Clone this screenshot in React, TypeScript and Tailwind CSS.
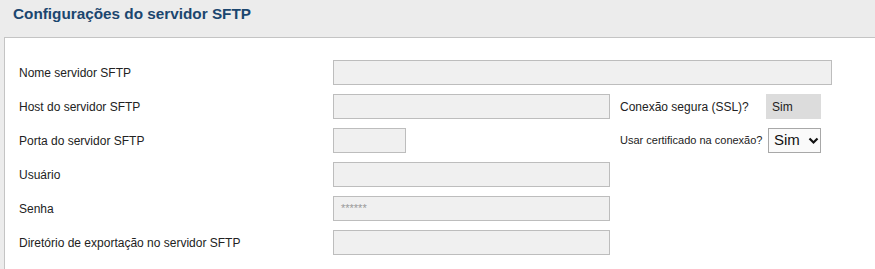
import React from "react";

const font = { fontFamily: '"Liberation Sans", Arial, sans-serif' };

function Field({ w, children }: { w: string; children?: React.ReactNode }) {
  return (
    <div className={`${w} shrink-0 h-[25px] border border-[#bdbdbd] bg-[#f0f0f0] flex items-center pl-[7px] text-[11px] text-[#9a9a9a]`}>
      {children}
    </div>
  );
}

function Label({ children }: { children: React.ReactNode }) {
  return <div className="w-[314px] shrink-0 whitespace-nowrap text-[12px] text-[#222]">{children}</div>;
}

export default function App() {
  return (
    <div className="w-[875px] h-[269px] bg-[#ececec] overflow-hidden" style={font}>
      <div className="h-[37px] pl-[13px] pt-[4px]">
        <h1 className="text-[15.3px] font-bold text-[#1b466f] leading-[20px]">Configurações do servidor SFTP</h1>
      </div>
      <div className="ml-[4px] h-[232px] bg-white border-l border-t border-[#c4c4c4] pl-[14px] pt-[22px] flex flex-col gap-[9px]">
        <div className="flex items-center">
          <Label>Nome servidor SFTP</Label>
          <Field w="w-[499px]" />
        </div>
        <div className="flex items-center">
          <Label>Host do servidor SFTP</Label>
          <Field w="w-[277px]" />
          <div className="ml-[10px] w-[146px] shrink-0 whitespace-nowrap text-[12px] text-[#222]">Conexão segura (SSL)?</div>
          <div className="w-[55px] h-[25px] shrink-0 bg-[#dcdcdc] flex items-center pl-[6px] text-[12px] text-[#222]">Sim</div>
        </div>
        <div className="flex items-center">
          <Label>Porta do servidor SFTP</Label>
          <Field w="w-[73px]" />
          <div className="ml-[214px] w-[148px] shrink-0 whitespace-nowrap text-[11px] text-[#222]">Usar certificado na conexão?</div>
          <div className="w-[53px] h-[25px] shrink-0 border border-[#a8a8a8] bg-[#fafafa] flex items-center pl-[5px] gap-[8px] text-[15px] text-[#111]">
            <span>Sim</span>
            <svg width="11" height="8" viewBox="0 0 11 8">
              <path d="M1.5 1.5 L5.5 5.5 L9.5 1.5" fill="none" stroke="#111" strokeWidth="2.2" />
            </svg>
          </div>
        </div>
        <div className="flex items-center">
          <Label>Usuário</Label>
          <Field w="w-[277px]" />
        </div>
        <div className="flex items-center">
          <Label>Senha</Label>
          <Field w="w-[277px]">******</Field>
        </div>
        <div className="flex items-center">
          <Label>Diretório de exportação no servidor SFTP</Label>
          <Field w="w-[277px]" />
        </div>
      </div>
    </div>
  );
}
